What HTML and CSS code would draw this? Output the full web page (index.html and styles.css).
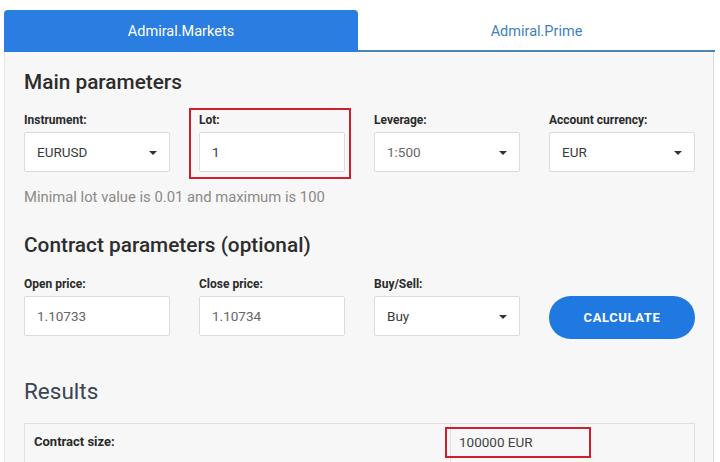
FILE: index.html
```html
<!DOCTYPE html>
<html>
<head>
<meta charset="utf-8">
<link rel="stylesheet" href="styles.css">
</head>
<body>
<div class="calc">
  <div class="tabs">
    <div class="tab active">Admiral.Markets</div>
    <div class="tab">Admiral.Prime</div>
  </div>
  <div class="panel">
    <h2 class="title">Main parameters</h2>
    <div class="row">
      <div class="field">
        <div class="label">Instrument:</div>
        <div class="input select">EURUSD<span class="caret"></span></div>
      </div>
      <div class="field marked">
        <div class="label">Lot:</div>
        <div class="input">1</div>
      </div>
      <div class="field">
        <div class="label">Leverage:</div>
        <div class="input select soft">1:500<span class="caret"></span></div>
      </div>
      <div class="field">
        <div class="label">Account currency:</div>
        <div class="input select">EUR<span class="caret"></span></div>
      </div>
    </div>
    <p class="hint">Minimal lot value is 0.01 and maximum is 100</p>
    <h2 class="title title2">Contract parameters (optional)</h2>
    <div class="row row2">
      <div class="field">
        <div class="label">Open price:</div>
        <div class="input soft">1.10733</div>
      </div>
      <div class="field">
        <div class="label">Close price:</div>
        <div class="input soft">1.10734</div>
      </div>
      <div class="field">
        <div class="label">Buy/Sell:</div>
        <div class="input select">Buy<span class="caret"></span></div>
      </div>
      <div class="field btnfield">
        <button class="btn">CALCULATE</button>
      </div>
    </div>
    <h2 class="title results">Results</h2>
    <div class="table">
      <div class="cell key">Contract size:</div>
      <div class="cell val"><span class="valmark">100000 EUR</span></div>
    </div>
  </div>
</div>
</body>
</html>
```
FILE: styles.css
```css
*, *::before, *::after { box-sizing: border-box; }
html, body { margin: 0; padding: 0; background: #fff; }
body { font-family: Roboto, "Liberation Sans", Arial, sans-serif; color: #333; }
.calc { margin: 10px 0 0 4px; width: 711px; }
.tabs { display: flex; height: 42px; }
.tab {
  flex: 1; display: flex; align-items: center; justify-content: center; padding-top: 2px;
  font-size: 14.5px; color: #3f7fc2; border-bottom: 2px solid #4a86b5;
}
.tab.active {
  background: #2a7de1; color: #fff; border-radius: 4px 4px 0 0;
  border-bottom-color: #2a7de1; flex: 0 0 354px;
}
.panel {
  background: #f7f7f7; border-left: 1px solid #e3e3e3; border-right: 1px solid #dcdcdc;
  width: 710px; padding: 17px 0 0 19px; height: 420px;
}
.title { margin: 0; font-size: 20.8px; font-weight: 500; line-height: 26px; color: #2d2d2d; }
.row {
  display: grid; grid-template-columns: repeat(4, 146px); justify-content: space-between;
  width: 671px; margin-top: 17px;
}
.field { position: relative; }
.label { font-size: 12px; font-weight: 700; line-height: 16px; color: #2a2a2a; margin-bottom: 4px; }
.input {
  height: 40px; background: #fff; border: 1px solid #dcdcdc; border-radius: 2px;
  display: flex; align-items: center; padding-left: 12px; font-size: 13.5px; color: #3a3a3a;
  position: relative;
}
.input.soft { color: #666; }
.caret {
  position: absolute; right: 12px; top: 18px; width: 0; height: 0;
  border-left: 4px solid transparent; border-right: 4px solid transparent; border-top: 4px solid #333;
}
.marked::after {
  content: ""; position: absolute; left: -10px; right: -6px; top: -4px; bottom: -7px;
  border: 2px solid #cf1f2e;
}
.hint { margin: 15px 0 0; font-size: 14.8px; color: #8a8a8a; line-height: 20px; }
.title2 { margin-top: 25px; }
.row2 { margin-top: 18px; }
.btnfield { display: flex; align-items: flex-end; }
.btn {
  width: 147px; height: 43px; margin-bottom: -3px; border: none; border-radius: 22px;
  background: #2079e0; color: #fff; font-family: Roboto, "Liberation Sans", Arial, sans-serif;
  font-size: 13px; font-weight: 700; letter-spacing: 0.6px;
}
.results { margin-top: 42px; font-size: 22.5px; font-weight: 400; color: #3a4552; }
.table {
  margin-top: 19px; width: 671px; display: grid; grid-template-columns: 425px 1fr;
  border: 1px solid #e0e0e0; border-bottom: none; height: 40px;
}
.cell { padding: 10px 0 0 9px; font-size: 13px; line-height: 16px; }
.key { font-weight: 700; color: #2a2a2a; }
.val { border-left: 1px solid #e0e0e0; position: relative; color: #444; font-size: 13.5px; padding-left: 8px; }
.valmark::after {
  content: ""; position: absolute; left: -6px; top: 3px; width: 146px; height: 31px;
  border: 2px solid #cf1f2e;
}
```
